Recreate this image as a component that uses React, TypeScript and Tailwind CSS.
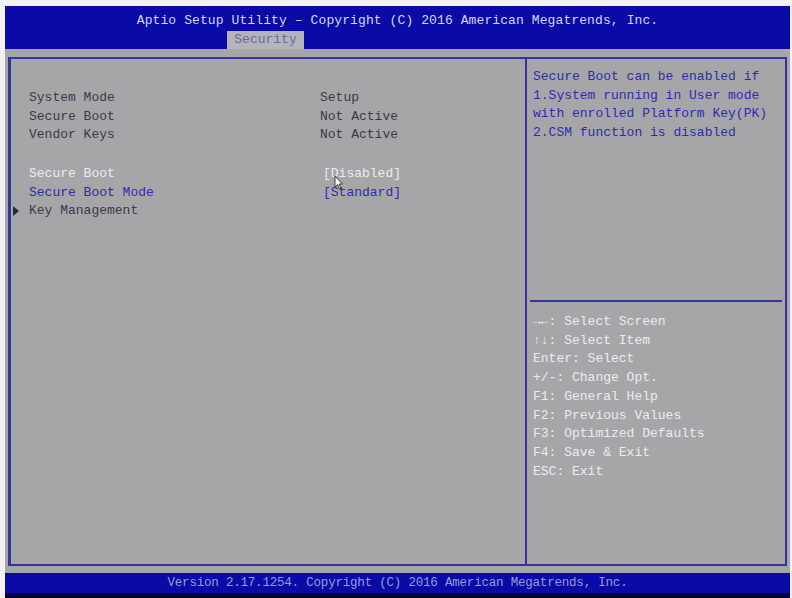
import type { JSX } from "react";

const mono = { fontFamily: '"Liberation Mono", "DejaVu Sans Mono", monospace' };

const infoRows = [
  { label: "System Mode", value: "Setup" },
  { label: "Secure Boot", value: "Not Active" },
  { label: "Vendor Keys", value: "Not Active" },
];

const helpLines = [
  "Secure Boot can be enabled if",
  "1.System running in User mode",
  "with enrolled Platform Key(PK)",
  "2.CSM function is disabled",
];

const keyLines = [
  "\u2192\u2190: Select Screen",
  "\u2191\u2193: Select Item",
  "Enter: Select",
  "+/-: Change Opt.",
  "F1: General Help",
  "F2: Previous Values",
  "F3: Optimized Defaults",
  "F4: Save & Exit",
  "ESC: Exit",
];

function Cursor(): JSX.Element {
  return (
    <svg className="absolute left-[329px] top-[126px]" width="10" height="15" viewBox="0 0 10 15">
      <path d="M1 1 L1 12 L3.5 9.5 L5.5 14 L7 13.3 L5 9 L8.5 9 Z" fill="#f4f4f4" stroke="#222" strokeWidth="0.8" />
    </svg>
  );
}

export default function App(): JSX.Element {
  return (
    <div className="w-[792px] h-[598px] bg-[#f2f2f4] pl-[5px] pr-[2px] pt-[6px] flex flex-col text-[13px] leading-[18.7px]" style={mono}>
      {/* header */}
      <div className="h-[43px] bg-[#0a0aa6] flex flex-col items-center shrink-0">
        <div className="mt-[6px] text-[#d6d6ee] tracking-[0.1px]">
          Aptio Setup Utility – Copyright (C) 2016 American Megatrends, Inc.
        </div>
        <div className="mt-auto self-start ml-[222px] w-[77px] h-[18px] bg-[#b4b4bc] text-[#6a6aa0] flex items-center justify-center">
          Security
        </div>
      </div>

      {/* body */}
      <div className="relative flex-1 bg-[#a6a6a8] pt-[8px] pl-[3px] pr-[3px] pb-[7px] flex">
        <div className="flex-1 flex border-2 border-[#34349a] border-l-[3px]">
          {/* left column */}
          <div className="w-[516px] border-r-2 border-[#34349a] pt-[30px] pl-[18px] text-[#3a3a48]">
            {infoRows.map((r) => (
              <div key={r.label} className="flex h-[18.7px]">
                <span className="w-[291px]">{r.label}</span>
                <span>{r.value}</span>
              </div>
            ))}
            <div className="h-[20px]" />
            <div className="flex h-[18.7px] text-[#ececf0]">
              <span className="w-[294px]">Secure Boot</span>
              <span>[Disabled]</span>
            </div>
            <div className="flex h-[18.7px] text-[#2c2cb4]">
              <span className="w-[294px]">Secure Boot Mode</span>
              <span>[Standard]</span>
            </div>
            <div className="relative flex h-[18.7px]">
              <span className="absolute -left-[16px] top-[4px] w-0 h-0 border-y-[5px] border-y-transparent border-l-[6px] border-l-[#2a2a34]" />
              <span>Key Management</span>
            </div>
          </div>

          {/* right column */}
          <div className="flex-1 flex flex-col">
            <div className="h-[243px] border-b-2 border-[#34349a] mx-[3px] pt-[9px] pl-[3px] text-[#2c2cb0]">
              {helpLines.map((l) => (
                <div key={l} className="whitespace-pre">{l}</div>
              ))}
            </div>
            <div className="pt-[11px] pl-[6px] text-[#ececf0]">
              {keyLines.map((l) => (
                <div key={l} className="whitespace-pre">{l}</div>
              ))}
            </div>
          </div>
        </div>
        <Cursor />
      </div>

      {/* footer */}
      <div className="h-[20px] bg-[#0a0aa6] shrink-0 flex items-center justify-center text-[#9a9ad8] text-[12.5px] tracking-[-0.2px]">
        Version 2.17.1254. Copyright (C) 2016 American Megatrends, Inc.
      </div>
      <div className="h-[5px] bg-[#04043a] shrink-0" />
    </div>
  );
}
